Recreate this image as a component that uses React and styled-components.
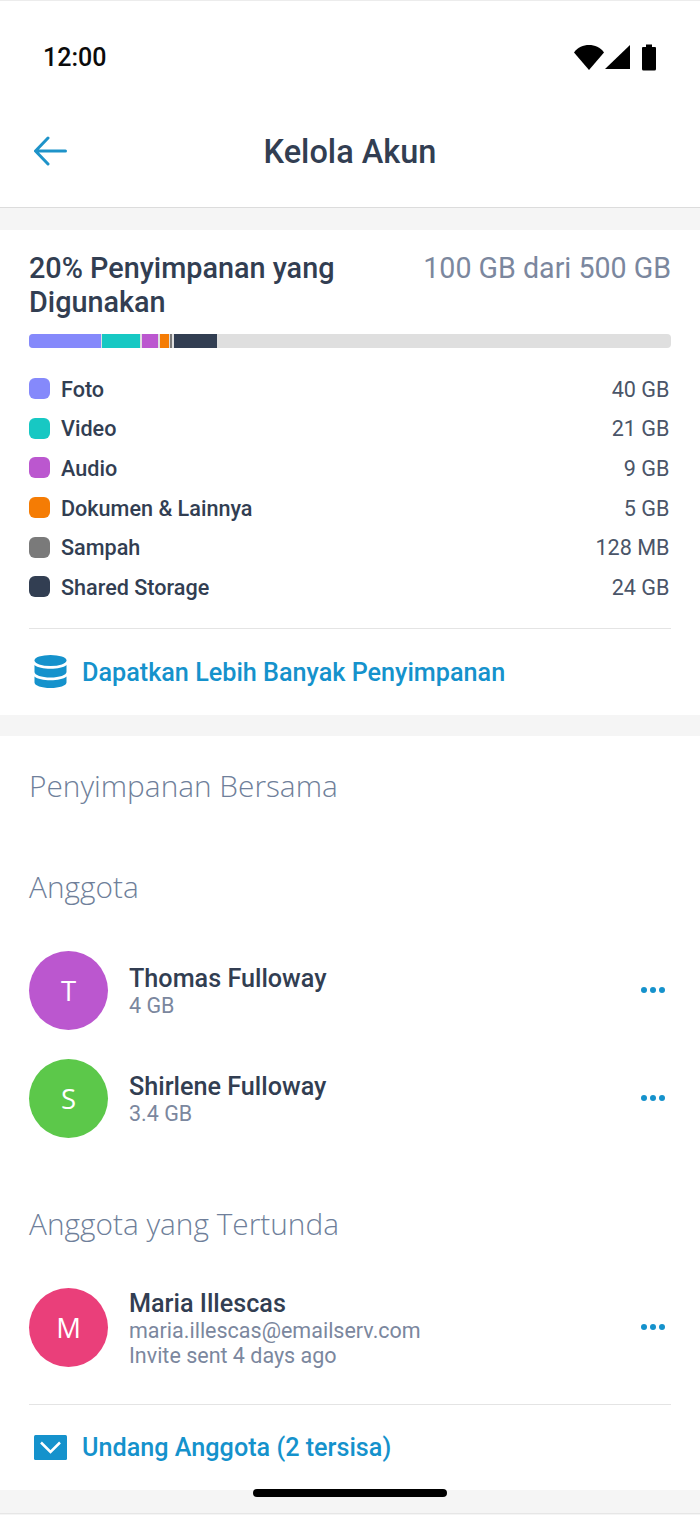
import React from 'react'
import styled, { createGlobalStyle } from 'styled-components'

const GlobalStyle = createGlobalStyle`
  html, body {
    margin: 0;
    padding: 0;
    background: #fff;
  }
  * {
    box-sizing: border-box;
  }
`

const Page = styled.div`
  width: 700px;
  height: 1515px;
  overflow: hidden;
  background: #f5f5f5;
  font-family: Roboto, 'Liberation Sans', sans-serif;
  color: #323e52;
  position: relative;
`

const Top = styled.div`
  background: #fff;
  border-top: 1px solid #ececec;
  border-bottom: 1px solid #dcdcdc;
`

const StatusBar = styled.div`
  height: 112px;
  padding: 0 43px;
  display: flex;
  align-items: center;
  justify-content: space-between;
`

const Time = styled.div`
  padding-top: 1px;
  font-size: 25px;
  font-weight: 500;
  color: #0b0b0b;
`

const StatusIcons = styled.svg`
  display: block;
`

const Header = styled.header`
  height: 94px;
  padding: 0 34px 18px;
  display: grid;
  grid-template-columns: 1fr auto 1fr;
  align-items: center;
`

const Title = styled.h1`
  margin: 2px 0 0;
  font-size: 32.5px;
  line-height: 40px;
  font-weight: 500;
  color: #323e52;
`

const Card = styled.section`
  background: #fff;
  margin-top: ${props => props.$gap}px;
  padding: ${props => props.$top}px 29px 0;
`

const UsageHead = styled.div`
  display: flex;
  justify-content: space-between;
  align-items: flex-start;
`

const UsageTitle = styled.h2`
  margin: 0;
  width: 340px;
  font-size: 28.8px;
  line-height: 34px;
  font-weight: 500;
  color: #323e52;
`

const UsageAmount = styled.div`
  font-size: 28.6px;
  line-height: 34px;
  color: #7b879e;
`

const Bar = styled.div`
  height: 14px;
  margin-top: 15px;
  display: flex;
  background: #dfdfdf;
  border-radius: 4px;
  overflow: hidden;
`

const Segment = styled.div`
  width: ${props => props.$width}px;
  margin-right: ${props => props.$space}px;
  background: ${props => props.$color};
`

const Legend = styled.ul`
  list-style: none;
  margin: 21px 0 0;
  padding: 0;
`

const LegendRow = styled.li`
  height: 39.6px;
  display: flex;
  align-items: center;
  font-size: 21.6px;
  font-weight: 500;
`

const LegendName = styled.span`
  padding-top: 1px;
`

const Swatch = styled.span`
  width: 21px;
  height: 21px;
  margin-right: 11px;
  border-radius: 6px;
  background: ${props => props.$color};
`

const LegendSize = styled.span`
  margin-left: auto;
  margin-right: 1.5px;
  padding-top: 1px;
  font-weight: 400;
  color: #4a5568;
`

const Divider = styled.hr`
  margin: ${props => props.$top}px 0 0;
  border: 0;
  border-top: 1px solid #e4e4e4;
`

const ActionLink = styled.a`
  height: ${props => props.$height}px;
  padding-left: 5px;
  display: flex;
  align-items: center;
  gap: 15px;
  font-size: 25.2px;
  font-weight: 500;
  color: #1592cc;
`

const ActionLabel = styled.span`
  padding-top: ${props => props.$nudge}px;
`

const SectionTitle = styled.h3`
  margin: ${props => props.$top}px 0 ${props => props.$bottom}px;
  font-family: 'Open Sans', 'Noto Sans', sans-serif;
  font-size: 29.8px;
  line-height: 34px;
  font-weight: 300;
  color: #6f7f9a;
`

const Members = styled.div`
  display: flex;
  flex-direction: column;
  gap: 29px;
`

const Member = styled.div`
  height: 79px;
  display: flex;
  align-items: center;
`

const Avatar = styled.div`
  width: 79px;
  height: 79px;
  margin-right: 21px;
  border-radius: 50%;
  display: flex;
  align-items: center;
  justify-content: center;
  background: ${props => props.$color};
  color: #fff;
  font-family: 'Open Sans', 'Noto Sans', sans-serif;
  font-size: 27.5px;
  font-weight: 500;
`

const MemberInfo = styled.div`
  flex: 1;
  padding-top: 2px;
  display: flex;
  flex-direction: column;
`

const MemberName = styled.div`
  font-size: 25.2px;
  line-height: 29px;
  font-weight: 500;
  color: #323e52;
`

const MemberNote = styled.div`
  font-size: 21.5px;
  line-height: 25px;
  color: #7b879e;
`

const Dots = styled.div`
  margin-right: 6px;
  display: flex;
  gap: 3px;
`

const Dot = styled.span`
  width: 6px;
  height: 6px;
  border-radius: 50%;
  background: #1592cc;
`

const HomeBar = styled.div`
  position: absolute;
  left: 253px;
  top: 1489px;
  width: 194px;
  height: 8px;
  border-radius: 4px;
  background: #000;
`

const BottomLine = styled.div`
  position: absolute;
  left: 0;
  right: 0;
  bottom: 1px;
  height: 1px;
  background: #e6e6e6;
`

const segments = [
  { color: '#8589fb', width: 72, space: 1 },
  { color: '#17c8c3', width: 38, space: 2 },
  { color: '#bb57cf', width: 16, space: 2 },
  { color: '#f57c04', width: 9, space: 1 },
  { color: '#7a7a7a', width: 2, space: 2 },
  { color: '#323e52', width: 43, space: 0 },
]

const legend = [
  { name: 'Foto', size: '40 GB', color: '#8589fb' },
  { name: 'Video', size: '21 GB', color: '#17c8c3' },
  { name: 'Audio', size: '9 GB', color: '#bb57cf' },
  { name: 'Dokumen & Lainnya', size: '5 GB', color: '#f57c04' },
  { name: 'Sampah', size: '128 MB', color: '#7a7a7a' },
  { name: 'Shared Storage', size: '24 GB', color: '#323e52' },
]

const BackArrow = () => (
  <svg width="33" height="30" viewBox="0 0 33 30" fill="none" stroke="#1e93c9" strokeWidth="3" strokeLinecap="round" strokeLinejoin="round">
    <path d="M31.5 15H2M14 2 1.5 15 14 28" />
  </svg>
)

const DatabaseIcon = () => (
  <svg width="33" height="33" viewBox="0 0 33 33" fill="#1592cc">
    <ellipse cx="16.5" cy="5.5" rx="16" ry="5.5" />
    <path d="M.5 10c3 2.6 9 3.8 16 3.8S29.500 12.600 32.500 10v7c0 3-7 5.500-16 5.500S.5 20 .5 17z" />
    <path d="M.5 21.500c3 2.600 9 3.800 16 3.800s13-1.200 16-3.800V27.500c0 3-7 5.500-16 5.500S.5 30.500.5 27.500z" />
  </svg>
)

const MailIcon = () => (
  <svg width="33" height="25" viewBox="0 0 33 25">
    <rect width="33" height="25" rx="1.500" fill="#1592cc" />
    <path d="M7 7.500l9.500 9.500L26 7.500" fill="none" stroke="#fff" strokeWidth="2.500" />
  </svg>
)

const MoreDots = () => (
  <Dots>
    <Dot />
    <Dot />
    <Dot />
  </Dots>
)

const App = () => (
  <Page>
    <GlobalStyle />
    <Top>
      <StatusBar>
        <Time>12:00</Time>
        <StatusIcons width="83" height="28" viewBox="0 0 83 28">
          <path d="M0 9.500C4 4 9 2 15 2s11 2 15 7.500L15 27z" />
          <path d="M31 26 56 2v24z" />
          <path d="M68 5a1 1 0 0 1 1-1h3V1.500h6V4h3a1 1 0 0 1 1 1v21a1.500 1.500 0 0 1-1.500 1.500h-11A1.500 1.500 0 0 1 68 26z" />
        </StatusIcons>
      </StatusBar>
      <Header>
        <BackArrow />
        <Title>Kelola Akun</Title>
      </Header>
    </Top>

    <Card $gap={22} $top={21}>
      <UsageHead>
        <UsageTitle>20% Penyimpanan yang Digunakan</UsageTitle>
        <UsageAmount>100 GB dari 500 GB</UsageAmount>
      </UsageHead>
      <Bar>
        {segments.map(s => (
          <Segment key={s.color} $color={s.color} $width={s.width} $space={s.space} />
        ))}
      </Bar>
      <Legend>
        {legend.map(item => (
          <LegendRow key={item.name}>
            <Swatch $color={item.color} />
            <LegendName>{item.name}</LegendName>
            <LegendSize>{item.size}</LegendSize>
          </LegendRow>
        ))}
      </Legend>
      <Divider $top={21} />
      <ActionLink $height={86}>
        <DatabaseIcon />
        <ActionLabel $nudge={2}>Dapatkan Lebih Banyak Penyimpanan</ActionLabel>
      </ActionLink>
    </Card>

    <Card $gap={21} $top={33}>
      <SectionTitle $top={0} $bottom={0}>Penyimpanan Bersama</SectionTitle>
      <SectionTitle $top={67} $bottom={47}>Anggota</SectionTitle>
      <Members>
        <Member>
          <Avatar $color="#bb57cf">T</Avatar>
          <MemberInfo>
            <MemberName>Thomas Fulloway</MemberName>
            <MemberNote>4 GB</MemberNote>
          </MemberInfo>
          <MoreDots />
        </Member>
        <Member>
          <Avatar $color="#5cc84a">S</Avatar>
          <MemberInfo>
            <MemberName>Shirlene Fulloway</MemberName>
            <MemberNote>3.4 GB</MemberNote>
          </MemberInfo>
          <MoreDots />
        </Member>
      </Members>
      <SectionTitle $top={69} $bottom={47}>Anggota yang Tertunda</SectionTitle>
      <Member>
        <Avatar $color="#ea3f7a">M</Avatar>
        <MemberInfo>
          <MemberName>Maria Illescas</MemberName>
          <MemberNote>maria.illescas@emailserv.com</MemberNote>
          <MemberNote>Invite sent 4 days ago</MemberNote>
        </MemberInfo>
        <MoreDots />
      </Member>
      <Divider $top={37} />
      <ActionLink $height={85}>
        <MailIcon />
        <ActionLabel $nudge={0}>Undang Anggota (2 tersisa)</ActionLabel>
      </ActionLink>
    </Card>

    <HomeBar />
    <BottomLine />
  </Page>
)

export default App
